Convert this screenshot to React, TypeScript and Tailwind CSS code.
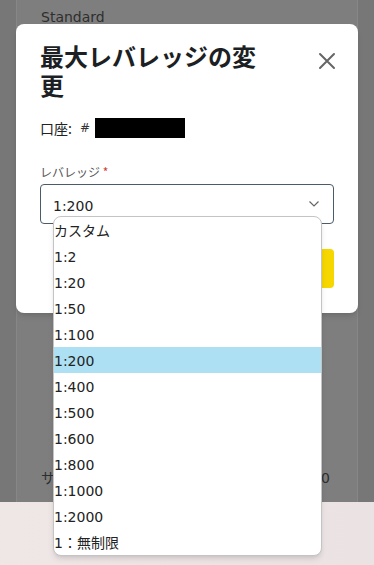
import React from 'react';

const options = [
    'カスタム',
    '1:2',
    '1:20',
    '1:50',
    '1:100',
    '1:200',
    '1:400',
    '1:500',
    '1:600',
    '1:800',
    '1:1000',
    '1:2000',
    '1：無制限',
];

export default function App() {
    const selected = '1:200';

    return (
        <div className="relative w-[374px] h-[565px] overflow-hidden bg-[#777777] font-['DejaVu_Sans','Noto_Sans_CJK_JP',sans-serif]">
            {/* Page behind the dimmed overlay */}
            <div className="flex flex-col h-full">
                <div className="flex-1 mx-4 bg-[#7e7e7e] border-x border-[#878787] flex flex-col">
                    <div className="pl-[24px] pt-[7px] text-sm leading-5 text-[#2e2e2e]">Standard</div>
                    <div className="mt-auto mb-[14px] pl-[24px] pr-[27px] flex justify-between text-sm leading-5 text-[#2e2e2e]">
                        <span>サイズ</span>
                        <span>0</span>
                    </div>
                </div>
                <div className="h-[63px] bg-gradient-to-r from-[#efe6e6] to-[#ebe3e3]" />
            </div>

            {/* Modal */}
            <div className="absolute left-4 top-6 w-[342px] bg-white rounded-lg shadow-md px-[24px] pt-[17px] pb-[25px]">
                <div className="flex justify-between items-start">
                    <h2 className="w-[228px] text-[24px] leading-[29px] font-bold text-[#1c1f23] font-['Noto_Sans_CJK_JP',sans-serif]">
                        最大レバレッジの変更
                    </h2>
                    <button className="mt-[11px] mr-[-2px] text-[#666]">
                        <svg width="18" height="18" viewBox="0 0 18 18" fill="none" stroke="currentColor" strokeWidth="2" strokeLinecap="round">
                            <path d="M2 2 L16 16 M16 2 L2 16" />
                        </svg>
                    </button>
                </div>

                <div className="mt-[19px] flex items-center text-sm leading-5 text-[#222]">
                    <span className="font-['Noto_Sans_CJK_JP',sans-serif]">口座:</span>
                    <span className="ml-[8px] text-[12px] text-[#333]">#</span>
                    <span className="ml-[5px] w-[90px] h-[20px] bg-black" />
                </div>

                <div className="mt-[26px] text-xs leading-4 text-[#555] font-['Noto_Sans_CJK_JP',sans-serif]">
                    レバレッジ <span className="text-[#d43b3b]">*</span>
                </div>
                <div className="mt-[4px] h-[40px] border border-[#4c5b68] rounded-[4px] flex items-center justify-between pl-[12px] pr-[14px] text-sm text-[#222]">
                    <span className="pt-[4px]">1:200</span>
                    <svg width="10" height="6" viewBox="0 0 10 6" fill="none" stroke="#666" strokeWidth="1.2">
                        <path d="M0.5 0.5 L5 5 L9.5 0.5" />
                    </svg>
                </div>

                <div className="mt-[25px] flex justify-end">
                    <button className="w-[140px] h-[39px] rounded-[4px] bg-[#f6d700]" />
                </div>
            </div>

            {/* Open select list */}
            <ul className="absolute left-[53px] top-[216px] w-[269px] bg-white border border-[#c4c4c4] rounded-lg shadow-md overflow-hidden text-sm text-[#222]">
                {options.map(o => (
                    <li
                        key={o}
                        className={`h-[26px] flex items-center pt-[2px] ${o === selected ? 'bg-[#ade0f2]' : ''}`}
                    >
                        {o}
                    </li>
                ))}
            </ul>
        </div>
    );
}
